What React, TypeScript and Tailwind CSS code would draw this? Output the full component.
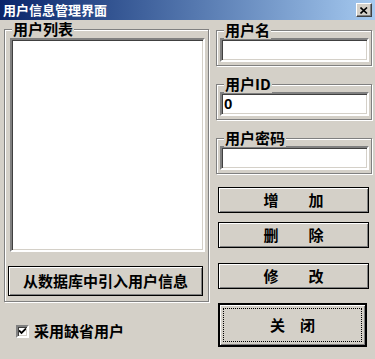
import React from "react";

const cjk = { fontFamily: '"Noto Sans CJK SC", "Noto Sans", sans-serif' };

const sunken =
  "border-2 border-t-[#808080] border-l-[#808080] border-b-white border-r-white bg-white shadow-[inset_1px_1px_0_#404040,inset_-1px_-1px_0_#d4d0c8]";

const GroupBox = ({
  label,
  className,
  children,
}: {
  label: string;
  className: string;
  children: React.ReactNode;
}) => {
  return (
    <div
      className={`relative border border-[#808080] shadow-[inset_1px_1px_0_#fff,1px_1px_0_#fff] ${className}`}
    >
      <span className="absolute -top-[10px] left-[7px] bg-[#d4d0c8] px-[1px] text-[15px] leading-[18px] font-bold text-black">
        {label}
      </span>
      {children}
    </div>
  );
};

const Field = ({ label, value }: { label: string; value?: string }) => {
  return (
    <GroupBox label={label} className="h-[36px] w-[156px] pt-[7px]">
      <div
        className={`ml-[3px] flex h-[24px] w-[149px] items-center pl-[2px] text-[15px] font-bold text-black ${sunken}`}
        style={{ fontFamily: '"Liberation Sans", sans-serif' }}
      >
        {value}
      </div>
    </GroupBox>
  );
};

const Button = ({ text, className }: { text: string; className: string }) => {
  return (
    <div
      className={`flex items-center justify-center border border-black bg-[#d4d0c8] text-[15px] font-bold whitespace-pre text-black shadow-[inset_1px_1px_0_#fff,inset_-1px_-1px_0_#808080] ${className}`}
    >
      {text}
    </div>
  );
};

const App = () => {
  return (
    <div className="flex h-[359px] w-[375px] flex-col overflow-hidden bg-[#d4d0c8]" style={cjk}>
      {/* title bar */}
      <div className="flex h-[20px] items-center justify-between bg-gradient-to-r from-[#0a246a] to-[#a6caf0] pl-[3px] pr-[3px]">
        <span className="text-[13px] leading-[16px] font-bold text-white">用户信息管理界面</span>
        <div className="flex h-[14px] w-[16px] items-center justify-center border border-t-white border-l-white border-b-[#404040] border-r-[#404040] bg-[#d4d0c8] shadow-[inset_-1px_-1px_0_#808080]">
          <svg width="8" height="7" viewBox="0 0 8 7">
            <path d="M0.5 0.5 L7 6.5 M7 0.5 L0.5 6.5" stroke="#000" strokeWidth="1.6" />
          </svg>
        </div>
      </div>

      <div className="flex">
        {/* left column */}
        <div className="ml-[4px] flex w-[205px] flex-col">
          <GroupBox label="用户列表" className="mt-[9px] h-[273px] w-[205px] pt-[8px]">
            <div className={`ml-[5px] h-[214px] w-[195px] ${sunken}`} />
            <Button text="从数据库中引入用户信息" className="mt-[14px] ml-[3px] h-[30px] w-[195px]" />
          </GroupBox>
          <div className="mt-[20px] ml-[12px] flex items-center gap-[5px]">
            <div className={`flex h-[13px] w-[13px] items-center justify-center ${sunken}`}>
              <svg width="7" height="7" viewBox="0 0 7 7">
                <path d="M0 2.5 L2.5 5 L7 0.5" fill="none" stroke="#000" strokeWidth="1.8" />
              </svg>
            </div>
            <span className="text-[15px] leading-[18px] font-bold text-black">采用缺省用户</span>
          </div>
        </div>

        {/* right column */}
        <div className="ml-[7px] flex flex-col">
          <div className="mt-[10px]">
            <Field label="用户名" />
          </div>
          <div className="mt-[18px]">
            <Field label="用户ID" value="0" />
          </div>
          <div className="mt-[18px]">
            <Field label="用户密码" />
          </div>
          <Button text={"增\u3000\u3000加"} className="mt-[13px] ml-[2px] h-[26px] w-[151px]" />
          <Button text={"删\u3000\u3000除"} className="mt-[9px] ml-[2px] h-[26px] w-[151px]" />
          <Button text={"修\u3000\u3000改"} className="mt-[15px] ml-[2px] h-[26px] w-[151px]" />
          <div className="mt-[14px] ml-[2px] flex h-[44px] w-[149px] border-2 border-black bg-[#d4d0c8] p-[3px] shadow-[inset_1px_1px_0_#fff,inset_-1px_-1px_0_#808080]">
            <div className="flex flex-1 items-center justify-center border border-dotted border-black text-[15px] font-bold whitespace-pre text-black">
              {"关\u3000闭"}
            </div>
          </div>
        </div>
      </div>
    </div>
  );
};

export default App;
